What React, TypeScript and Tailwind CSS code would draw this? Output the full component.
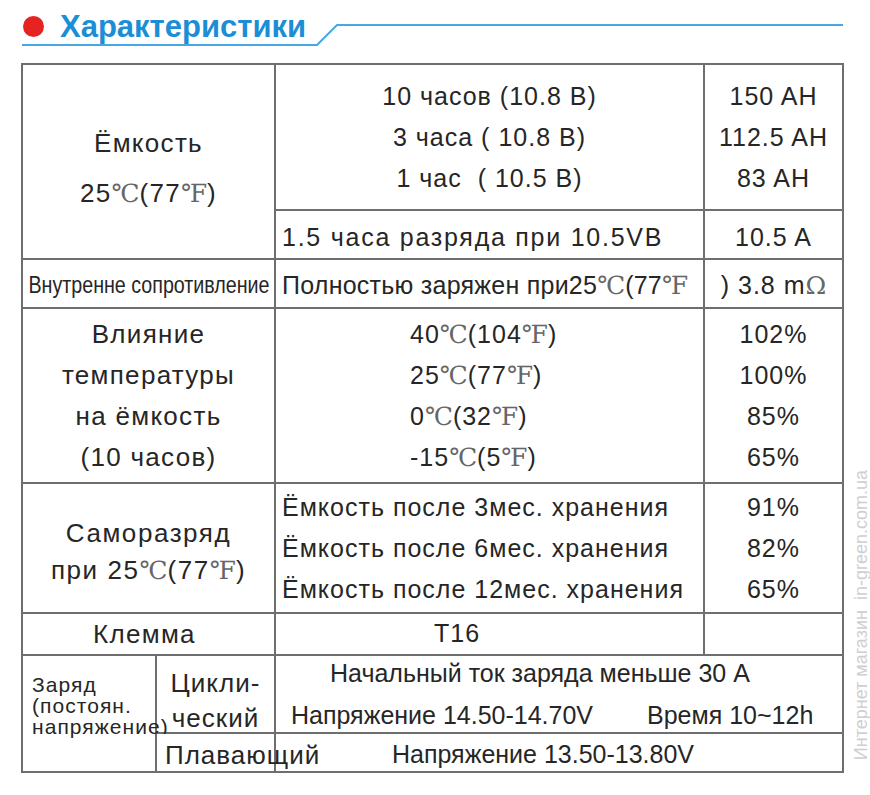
const Deg = ({ s }: { s: string }) => (
  <span className="font-['DejaVu_Serif','Liberation_Serif',serif] text-[25px] font-light tracking-normal text-[#666]">{s}</span>
);

export default function App() {
  return (
    <div className="relative w-[870px] h-[795px] overflow-hidden bg-white font-['Liberation_Sans',Arial,sans-serif] text-[#262626]">
      {/* Header */}
      <div className="relative h-[63px]">
        <svg className="absolute inset-0" width="870" height="63" viewBox="0 0 870 63">
          <polyline points="22,45 317,45 337,25 843,25" fill="none" stroke="#45a8e4" strokeWidth="2" />
        </svg>
        <div className="relative flex items-center gap-[16px] pl-[23px] pt-[11px]">
          <span className="h-[21px] w-[21px] rounded-full bg-[#e52421]" />
          <h1 className="text-[31px] font-bold leading-[31px] text-[#1b8ed6]">Характеристики</h1>
        </div>
      </div>

      {/* Table */}
      <div className="ml-[21px] grid w-[823px] grid-cols-[132px_117px_427px_137px] grid-rows-[144px_47px_47px_173px_128px_40px_76px_37px] gap-[2px] bg-[#6e6e6e] p-[2px] text-[25px] tracking-[0.04em]">
        {/* Ёмкость */}
        <div className="col-span-2 row-span-2 flex flex-col items-center bg-white pt-[53px] text-[26px] leading-[50px] tracking-[0.05em]">
          <span>Ёмкость</span>
          <span>25<Deg s="℃" />(77<Deg s="℉" />)</span>
        </div>
        <div className="flex flex-col items-center justify-center whitespace-pre bg-white leading-[41px]">
          <span>10 часов (10.8 В)</span>
          <span>3 часа ( 10.8 В)</span>
          <span>1 час  ( 10.5 В)</span>
        </div>
        <div className="flex flex-col items-center justify-center bg-white leading-[41px]">
          <span>150 AH</span>
          <span>112.5 AH</span>
          <span>83 AH</span>
        </div>
        <div className="flex items-center whitespace-nowrap bg-white pl-[6px] pt-[6px] tracking-[0.07em]">1.5 часа разряда при 10.5VB</div>
        <div className="flex items-center justify-center bg-white pt-[6px]">10.5 A</div>

        {/* Внутренне сопротивление */}
        <div className="col-span-2 flex items-center justify-center whitespace-nowrap bg-white pt-[4px] text-[23px] tracking-normal">
          <span className="inline-block scale-x-[0.855]">Внутренне сопротивление</span>
        </div>
        <div className="flex items-center whitespace-nowrap bg-white pl-[6px] pt-[4px] tracking-[0.01em]">
          Полностью заряжен при25<Deg s="℃" />(77<Deg s="℉" />
        </div>
        <div className="flex items-center justify-center whitespace-pre bg-white pt-[4px]">
          ) 3.8 m<Deg s="Ω" />
        </div>

        {/* Влияние температуры */}
        <div className="col-span-2 flex flex-col items-center justify-center bg-white text-[26px] leading-[41px] tracking-[0.05em]">
          <span>Влияние</span>
          <span>температуры</span>
          <span>на ёмкость</span>
          <span>(10 часов)</span>
        </div>
        <div className="flex flex-col items-start justify-center bg-white pl-[134px] leading-[41px]">
          <span>40<Deg s="℃" />(104<Deg s="℉" />)</span>
          <span>25<Deg s="℃" />(77<Deg s="℉" />)</span>
          <span>0<Deg s="℃" />(32<Deg s="℉" />)</span>
          <span>-15<Deg s="℃" />(5<Deg s="℉" />)</span>
        </div>
        <div className="flex flex-col items-center justify-center bg-white leading-[41px]">
          <span>102%</span>
          <span>100%</span>
          <span>85%</span>
          <span>65%</span>
        </div>

        {/* Саморазряд */}
        <div className="col-span-2 flex flex-col items-center justify-center bg-white pt-[8px] text-[26px] leading-[37px] tracking-[0.06em]">
          <span>Саморазряд</span>
          <span>при 25<Deg s="℃" />(77<Deg s="℉" />)</span>
        </div>
        <div className="flex flex-col items-start justify-center whitespace-nowrap bg-white pl-[6px] leading-[41px]">
          <span>Ёмкость после 3мес. хранения</span>
          <span>Ёмкость после 6мес. хранения</span>
          <span>Ёмкость после 12мес. хранения</span>
        </div>
        <div className="flex flex-col items-center justify-center bg-white leading-[41px]">
          <span>91%</span>
          <span>82%</span>
          <span>65%</span>
        </div>

        {/* Клемма */}
        <div className="col-span-2 flex items-center justify-center bg-white pr-[8px] text-[26px] tracking-[0.05em]">Клемма</div>
        <div className="flex items-center bg-white pl-[158px]">T16</div>
        <div className="bg-white" />

        {/* Заряд */}
        <div className="relative z-10 row-span-2 flex flex-col whitespace-nowrap bg-white pl-[9px] pt-[18px] text-[21px] leading-[21px] tracking-[0.05em]">
          <span>Заряд</span>
          <span>(постоян.</span>
          <span>напряжение)</span>
        </div>
        <div className="flex flex-col items-center justify-center bg-white pt-[14px] text-[26px] leading-[35px]">
          <span>Цикли-</span>
          <span>ческий</span>
        </div>
        <div className="col-span-2 flex flex-col justify-center whitespace-nowrap bg-white leading-[42px] tracking-normal">
          <span className="pl-[54px]">Начальный ток заряда меньше 30 А</span>
          <span className="flex gap-[54px] pl-[15px]">
            <span>Напряжение 14.50-14.70V</span>
            <span>Время 10~12h</span>
          </span>
        </div>
        <div className="relative z-10 flex items-center whitespace-nowrap bg-white pl-[8px] pt-[5px] text-[26px]">Плавающий</div>
        <div className="col-span-2 flex items-center whitespace-nowrap bg-white pl-[116px] pt-[5px] tracking-normal">Напряжение 13.50-13.80V</div>
      </div>

      {/* Watermark */}
      <div className="absolute left-[848px] top-[470px] rotate-180 whitespace-pre text-[18px] text-[#cfcfcf] [writing-mode:vertical-rl]">
        Интернет магазин  in-green.com.ua
      </div>
    </div>
  );
}
